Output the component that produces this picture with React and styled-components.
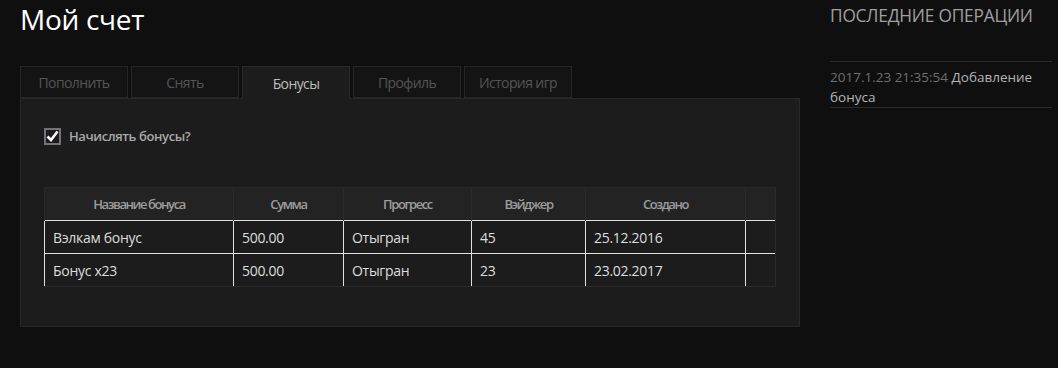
import React, { useState } from "react";
import styled, { createGlobalStyle } from "styled-components";

const Global = createGlobalStyle`
  html, body { margin: 0; padding: 0; background: #0f0f0f; }
  body { font-family: "Open Sans", "Noto Sans", sans-serif; color: #ddd; }
  * { box-sizing: border-box; }
`;

const Page = styled.div`
  display: flex;
  gap: 30px;
  padding: 0 6px 0 20px;
  width: 1058px;
  height: 368px;
`;

const Main = styled.div`
  width: 780px;
  display: flex;
  flex-direction: column;
`;

const Title = styled.h1`
  margin: 0;
  font-size: 28px;
  line-height: 38px;
  font-weight: 400;
  color: #fff;
  letter-spacing: -0.3px;
`;

const Tabs = styled.div`
  display: flex;
  gap: 3px;
  margin-top: 28px;
  position: relative;
  z-index: 1;
`;

const Tab = styled.div`
  width: 108px;
  height: ${(p) => (p.$active ? "33px" : "32px")};
  margin-bottom: ${(p) => (p.$active ? "-1px" : "0")};
  display: flex;
  align-items: center;
  justify-content: center;
  font-size: 14px;
  letter-spacing: -0.6px;
  color: ${(p) => (p.$active ? "#bdbdbd" : "#555")};
  background: ${(p) => (p.$active ? "#1c1c1c" : "#141414")};
  border: 1px solid ${(p) => (p.$active ? "#2a2a2a" : "#262626")};
  border-bottom: ${(p) => (p.$active ? "none" : "1px solid #262626")};
  cursor: pointer;
`;

const Panel = styled.div`
  background: #1c1c1c;
  border: 1px solid #282828;
  height: 229px;
  padding: 28px 24px 0 23px;
`;

const CheckRow = styled.label`
  display: flex;
  align-items: center;
  gap: 8px;
  font-size: 13px;
  font-weight: 600;
  letter-spacing: -0.4px;
  color: #a8a8a8;
  cursor: pointer;
`;

const Box = styled.span`
  width: 17px;
  height: 17px;
  border: 2px solid #77727a;
  background: #1c1c1c;
  display: flex;
  align-items: center;
  justify-content: center;
`;

const Table = styled.table`
  margin-top: 42px;
  width: 731px;
  border-collapse: collapse;
  table-layout: fixed;
  font-size: 14px;
`;

const Th = styled.th`
  height: 33px;
  padding: 0;
  background: #232323;
  color: #9c9c9c;
  font-size: 13px;
  font-weight: 600;
  letter-spacing: -1.4px;
  text-align: center;
  border-right: 1px solid #2b2b2b;
  border-top: 1px solid #282828;
  &:first-child { border-left: 1px solid #282828; }
`;

const Td = styled.td`
  height: 33px;
  padding: 0 0 0 8px;
  color: #dedede;
  letter-spacing: -0.3px;
  border-top: 1px solid #e0e0e0;
  border-left: 1px solid #e0e0e0;
  &:last-child { border-right: 1px solid #2a2a2a; }
  tr:last-child > & { border-bottom: 1px solid #2a2a2a; }
`;

const Side = styled.aside`
  width: 222px;
  display: flex;
  flex-direction: column;
`;

const SideTitle = styled.h2`
  margin: 0;
  padding-top: 5px;
  font-size: 17.3px;
  line-height: 22px;
  font-weight: 400;
  color: #a0a0a0;
  letter-spacing: -0.2px;
  white-space: nowrap;
`;

const OpList = styled.div`
  margin-top: 34px;
  border-top: 1px solid #2c2c2c;
`;

const Op = styled.div`
  padding: 5px 0 0;
  font-size: 13.5px;
  line-height: 20px;
  color: #b5b5b5;
  border-bottom: 1px solid #2c2c2c;
`;

const OpDate = styled.span`
  color: #707070;
`;

const tabs = ["Пополнить", "Снять", "Бонусы", "Профиль", "История игр"];
const cols = [189, 110, 128, 114, 160, 30];
const heads = ["Название бонуса", "Сумма", "Прогресс", "Вэйджер", "Создано", ""];
const rows = [
  ["Вэлкам бонус", "500.00", "Отыгран", "45", "25.12.2016", ""],
  ["Бонус x23", "500.00", "Отыгран", "23", "23.02.2017", ""],
];

export default function App() {
  const [active, setActive] = useState(2);
  const [checked, setChecked] = useState(true);
  return (
    <>
      <Global />
      <Page>
        <Main>
          <Title>Мой счет</Title>
          <Tabs>
            {tabs.map((t, i) => (
              <Tab key={t} $active={i === active} onClick={() => setActive(i)}>
                {t}
              </Tab>
            ))}
          </Tabs>
          <Panel>
            <CheckRow onClick={() => setChecked(!checked)}>
              <Box>
                {checked && (
                  <svg width="13" height="12" viewBox="0 0 13 12">
                    <path d="M1.5 6.5 L5 10 L11.5 1.5" fill="none" stroke="#fff" strokeWidth="2.6" />
                  </svg>
                )}
              </Box>
              Начислять бонусы?
            </CheckRow>
            <Table>
              <colgroup>
                {cols.map((w, i) => (
                  <col key={i} style={{ width: w }} />
                ))}
              </colgroup>
              <thead>
                <tr>
                  {heads.map((h, i) => (
                    <Th key={i}>{h}</Th>
                  ))}
                </tr>
              </thead>
              <tbody>
                {rows.map((r, ri) => (
                  <tr key={ri}>
                    {r.map((c, ci) => (
                      <Td key={ci}>{c}</Td>
                    ))}
                  </tr>
                ))}
              </tbody>
            </Table>
          </Panel>
        </Main>
        <Side>
          <SideTitle>ПОСЛЕДНИЕ ОПЕРАЦИИ</SideTitle>
          <OpList>
            <Op>
              <OpDate>2017.1.23 21:35:54</OpDate> Добавление бонуса
            </Op>
          </OpList>
        </Side>
      </Page>
    </>
  );
}
